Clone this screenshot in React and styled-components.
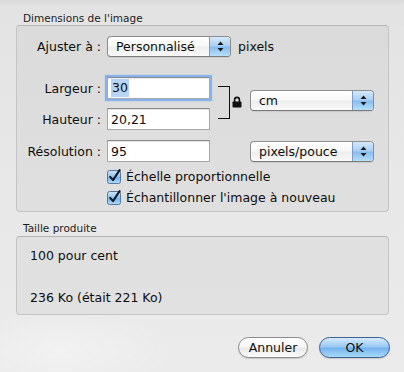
import styled, { createGlobalStyle } from "styled-components"

const GlobalStyle = createGlobalStyle`
    html, body {
        margin: 0;
        padding: 0;
    }
    body {
        font-family: "DejaVu Sans", "Lucida Grande", sans-serif;
        -webkit-font-smoothing: antialiased;
    }
`

const Sheet = styled.div`
    width: 404px;
    height: 372px;
    box-sizing: border-box;
    padding: 12px 15px 0 16px;
    display: flex;
    flex-direction: column;
    font-size: 12.5px;
    color: #0d0d0d;
    background:
        radial-gradient(ellipse 120px 40px at 60px 350px, rgba(255,255,255,0.35), transparent),
        linear-gradient(#d9d9d9 0px, #e3e3e3 6px, #e7e7e7 40%, #ebebeb 100%);
`

const GroupTitle = styled.div`
    font-size: 10.5px;
    line-height: 13px;
    padding-left: 7px;
    margin-top: ${props => props.$gap || 0}px;
    color: #1c1c1c;
`

const GroupBox = styled.div`
    display: flex;
    flex-direction: column;
    border: 1px solid #c4c4c4;
    border-top-color: #b4b4b4;
    border-radius: 4px;
    background-color: rgba(0, 0, 0, 0.035);
    padding: ${props => props.$padding};
    margin-top: ${props => props.$offset || 0}px;
`

const Row = styled.div`
    display: flex;
    align-items: center;
    height: ${props => props.$h || 22}px;
    margin-top: ${props => props.$mt || 0}px;
`

const Label = styled.span`
    width: 84px;
    margin-right: 6px;
    text-align: right;
    white-space: nowrap;
`

const TextField = styled.div`
    width: 103px;
    height: 22px;
    box-sizing: border-box;
    border: 1px solid #a8a8a8;
    border-top-color: #8a8a8a;
    background: #fff;
    box-shadow: ${props => props.$focus
        ? '0 0 1px 2px #86b3ea, inset 0 1px 1px rgba(0,0,0,0.08)'
        : 'inset 0 1px 1px rgba(0,0,0,0.12)'};
    padding-left: 3px;
    display: flex;
    align-items: center;
    span.sel {
        background: #b7d4f7;
        padding: 1px 1px 2px;
    }
`

const Popup = styled.div`
    width: 124px;
    height: 21px;
    box-sizing: border-box;
    display: flex;
    align-items: stretch;
    border: 1px solid #8e8e8e;
    border-bottom-color: #7a7a7a;
    border-radius: 4px;
    overflow: hidden;
    background: linear-gradient(#ffffff 0%, #f8f8f8 48%, #ededed 52%, #fafafa 100%);
    box-shadow: 0 1px 1px rgba(0,0,0,0.08);
    margin-left: ${props => props.$ml || 0}px;
    margin-bottom: ${props => props.$mb || 0}px;
`

const PopupText = styled.span`
    flex: 1;
    padding-left: 8px;
    display: flex;
    align-items: center;
`

const Stepper = styled.span`
    width: 20px;
    display: flex;
    align-items: center;
    justify-content: center;
    border-left: 1px solid #7d9cc7;
    background: linear-gradient(#d6e9fb 0%, #a9cff3 48%, #86bbef 52%, #b6e0fa 100%);
`

const Unit = styled.span`
    margin-left: 7px;
`

const DimsBlock = styled.div`
    display: flex;
    align-items: center;
    margin-top: 20px;
`

const DimsColumn = styled.div`
    display: flex;
    flex-direction: column;
    gap: 9px;
`

const Bracket = styled.div`
    width: 11px;
    height: 31px;
    border: 1px solid #111;
    border-left: none;
    margin-left: 8px;
    margin-bottom: 3px;
`

const LockWrap = styled.span`
    display: flex;
    margin-left: 2px;
    margin-bottom: 4px;
`

const CheckRow = styled.label`
    display: flex;
    align-items: center;
    height: 21px;
    padding-left: 90px;
    margin-top: ${props => props.$mt || 0}px;
    svg {
        margin-right: 5px;
    }
`

const Plain = styled.div`
    line-height: 16px;
    margin-top: ${props => props.$mt || 0}px;
`

const ButtonBar = styled.div`
    display: flex;
    justify-content: flex-end;
    gap: 11px;
    margin-top: 22px;
    margin-right: -1px;
`

const AquaButton = styled.button`
    height: 21px;
    width: ${props => props.$w}px;
    box-sizing: border-box;
    border-radius: 11px;
    font-family: inherit;
    font-size: 12.5px;
    color: #111;
    padding: 0;
    border: 1px solid ${props => props.$primary ? '#3f5f95' : '#8a8a8a'};
    background: ${props => props.$primary
        ? 'linear-gradient(#d5ebfc 0%, #97c8f3 48%, #72b2ee 52%, #a8daf9 100%)'
        : 'linear-gradient(#ffffff 0%, #f6f6f6 48%, #e9e9e9 52%, #fbfbfb 100%)'};
    box-shadow: 0 1px 1px rgba(0,0,0,0.15);
`

const Arrows = () => (
    <svg width="7" height="11" viewBox="0 0 7 11">
        <path d="M3.5 0.5 L6.5 4 L0.5 4 Z" fill="#1b1b1b" />
        <path d="M3.5 10.5 L6.5 7 L0.5 7 Z" fill="#1b1b1b" />
    </svg>
)

const Lock = () => (
    <svg width="10" height="12" viewBox="0 0 10 12">
        <path d="M2.6 6 V3.8 a2.4 2.4 0 0 1 4.8 0 V6" stroke="#111" strokeWidth="1.6" fill="none" />
        <rect x="0.5" y="5.5" width="9" height="6" rx="0.8" fill="#111" />
    </svg>
)

const Check = () => (
    <svg width="14" height="15" viewBox="0 0 14 15">
        <defs>
            <linearGradient id="cbg" x1="0" y1="0" x2="0" y2="1">
                <stop offset="0" stopColor="#cfe6fb" />
                <stop offset="0.5" stopColor="#8fc2f1" />
                <stop offset="0.52" stopColor="#74b1ee" />
                <stop offset="1" stopColor="#b3defa" />
            </linearGradient>
        </defs>
        <rect x="0.5" y="1.5" width="13" height="13" rx="2" fill="url(#cbg)" stroke="#58779f" />
        <path d="M3.2 7.8 L6 11.2 L12.6 1.2" stroke="#151b24" strokeWidth="2.1" fill="none" strokeLinecap="round" strokeLinejoin="round" />
    </svg>
)

const PopupButton = ({ children, ml, mb }) => (
    <Popup $ml={ml} $mb={mb}>
        <PopupText>{children}</PopupText>
        <Stepper><Arrows /></Stepper>
    </Popup>
)

const App = () => {
    return (
        <>
            <GlobalStyle />
            <Sheet>
                <GroupTitle>Dimensions de l'image</GroupTitle>
                <GroupBox $padding="10px 0 3px 0">
                    <Row $h={21}>
                        <Label>Ajuster à :</Label>
                        <PopupButton>Personnalisé</PopupButton>
                        <Unit>pixels</Unit>
                    </Row>
                    <DimsBlock>
                        <DimsColumn>
                            <Row>
                                <Label>Largeur :</Label>
                                <TextField $focus><span className="sel">30</span></TextField>
                            </Row>
                            <Row>
                                <Label>Hauteur :</Label>
                                <TextField>20,21</TextField>
                            </Row>
                        </DimsColumn>
                        <Bracket />
                        <LockWrap><Lock /></LockWrap>
                        <PopupButton ml={8} mb={6}>cm</PopupButton>
                    </DimsBlock>
                    <Row $mt={10}>
                        <Label>Résolution :</Label>
                        <TextField>95</TextField>
                        <PopupButton ml={40}>pixels/pouce</PopupButton>
                    </Row>
                    <CheckRow $mt={4}>
                        <Check />
                        Échelle proportionnelle
                    </CheckRow>
                    <CheckRow>
                        <Check />
                        Échantillonner l'image à nouveau
                    </CheckRow>
                </GroupBox>
                <GroupTitle $gap={10}>Taille produite</GroupTitle>
                <GroupBox $padding="11px 0 8px 13px" $offset={1}>
                    <Plain>100 pour cent</Plain>
                    <Plain $mt={26}>236 Ko (était 221 Ko)</Plain>
                </GroupBox>
                <ButtonBar>
                    <AquaButton $w={70}>Annuler</AquaButton>
                    <AquaButton $w={71} $primary>OK</AquaButton>
                </ButtonBar>
            </Sheet>
        </>
    )
}

export default App
